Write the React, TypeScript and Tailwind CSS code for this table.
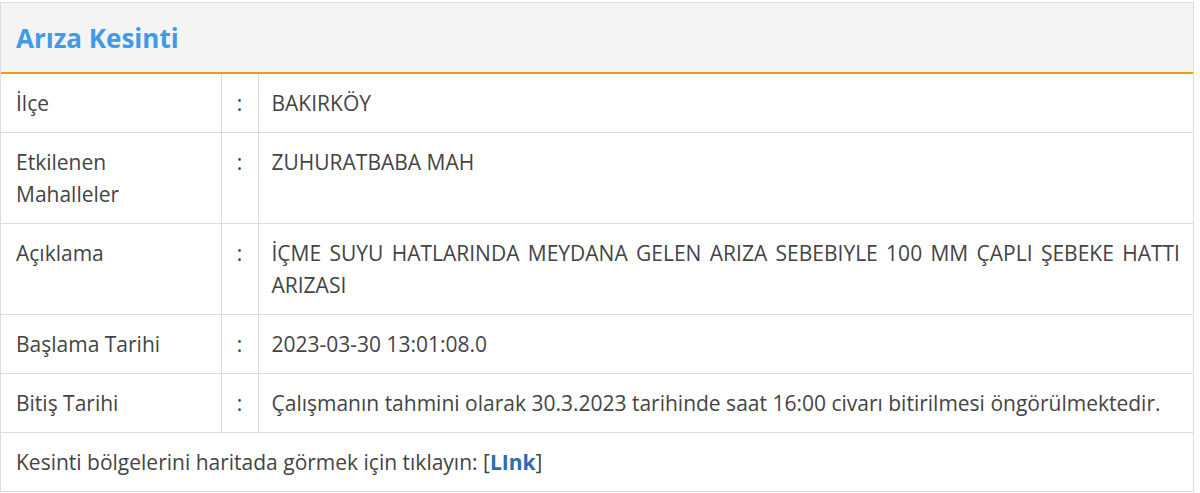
import React from 'react';

interface Row {
  label: React.ReactNode;
  value: React.ReactNode;
}

const rows: Row[] = [
  { label: 'İlçe', value: 'BAKIRKÖY' },
  { label: <>Etkilenen<br />Mahalleler</>, value: 'ZUHURATBABA MAH' },
  {
    label: 'Açıklama',
    value: 'İÇME SUYU HATLARINDA MEYDANA GELEN ARIZA SEBEBIYLE 100 MM ÇAPLI ŞEBEKE HATTI ARIZASI',
  },
  { label: 'Başlama Tarihi', value: '2023-03-30 13:01:08.0' },
  {
    label: 'Bitiş Tarihi',
    value: 'Çalışmanın tahmini olarak 30.3.2023 tarihinde saat 16:00 civarı bitirilmesi öngörülmektedir.',
  },
];

const App: React.FC = () => {
  return (
    <div className="bg-white w-[1200px] h-[493px] pt-[2px] font-['Open_Sans',sans-serif] text-[#444]">
      <div className="w-[1194px] border border-[#ddd]">
        {/* başlık */}
        <div className="h-[71px] bg-[#f4f4f4] border-b-[2px] border-[#f39c12] flex items-center px-[15px]">
          <h3 className="text-[26px] font-bold text-[#3d9be9] leading-none">Arıza Kesinti</h3>
        </div>

        <table className="w-full border-collapse text-[21px] leading-[32px]">
          <tbody>
            {rows.map((row, i) => (
              <tr key={i} className="border-b border-[#ddd] align-top">
                <td className="w-[220px] border-r border-[#ddd] py-[13px] pl-[15px]">{row.label}</td>
                <td className="w-[37px] border-r border-[#ddd] py-[13px] text-center">:</td>
                <td className="py-[13px] pl-[13px] pr-[13px] text-justify">{row.value}</td>
              </tr>
            ))}
            <tr>
              <td colSpan={3} className="py-[13px] pl-[15px]">
                Kesinti bölgelerini haritada görmek için tıklayın: [
                <a href="#" className="font-bold text-[#2d6bb0]">LInk</a>]
              </td>
            </tr>
          </tbody>
        </table>
      </div>
    </div>
  );
};

export default App;
